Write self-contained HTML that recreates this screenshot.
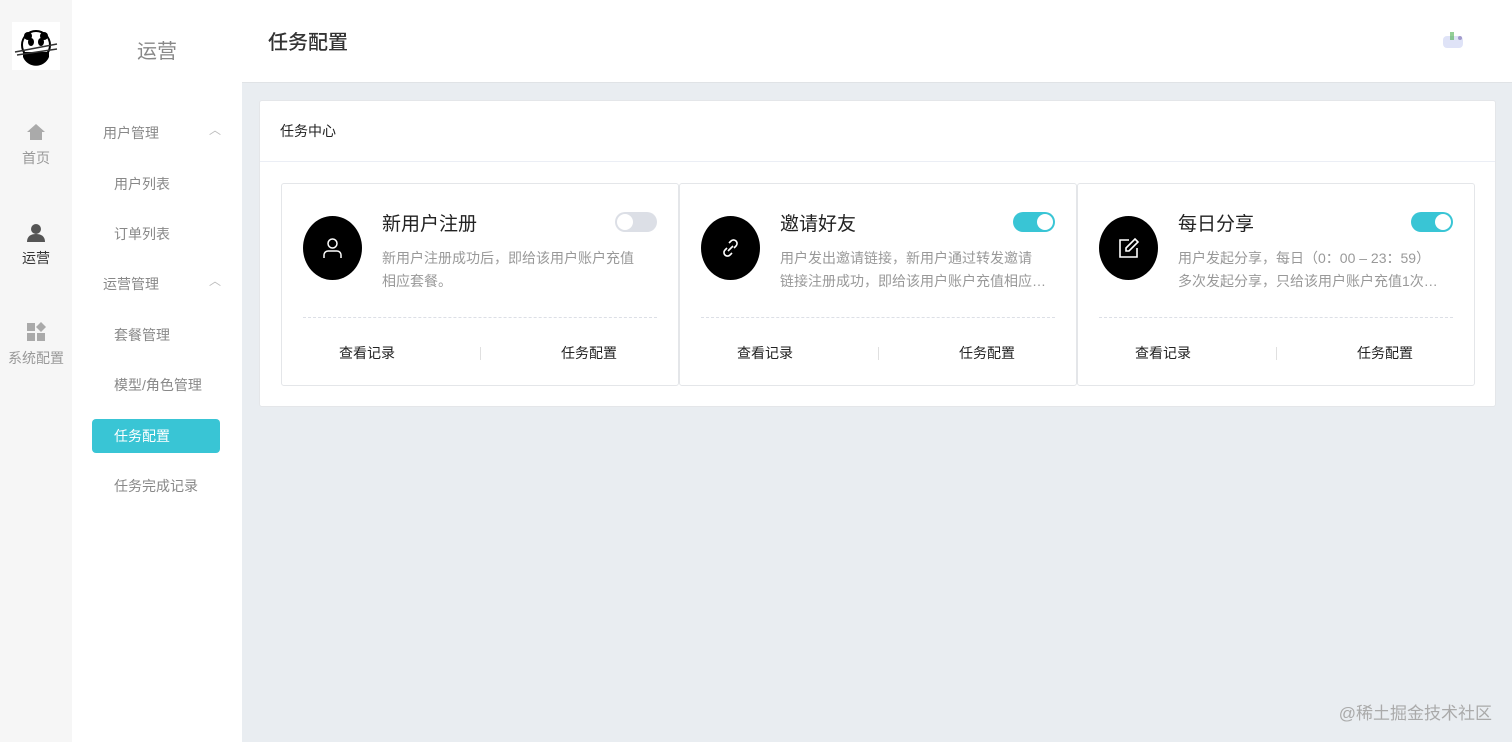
<!DOCTYPE html><html><head><meta charset="utf-8"><style>
*{box-sizing:border-box;margin:0;padding:0}
body{width:1512px;height:742px;overflow:hidden;font-family:"Liberation Sans","Noto Sans CJK SC",sans-serif;background:#e9edf1;position:relative}
.rail{position:absolute;left:0;top:0;width:72px;height:742px;background:#f6f6f6}
.logo{position:absolute;left:12px;top:22px;width:48px;height:48px;background:#fff}
.ri{position:absolute;left:0;width:72px;text-align:center;font-size:14px;color:#999}
.side{position:absolute;left:72px;top:0;width:170px;height:742px;background:#fff}
.side .t{position:absolute;top:35px;width:170px;text-align:center;font-size:20px;color:#888}
.g{position:absolute;left:31px;font-size:14px;color:#888}
.g span{position:absolute;left:106px;top:-2px;color:#bbb;font-size:12px}
.it{position:absolute;left:42px;font-size:14px;color:#888}
.act{position:absolute;left:20px;top:419px;width:128px;height:34px;border-radius:4px;background:#39c5d5}
.hd{position:absolute;left:242px;top:0;width:1270px;height:83px;background:#fff;border-bottom:1px solid #e0e3e6}
.hd h1{position:absolute;left:26px;top:26px;font-size:20px;font-weight:500;color:#333}
.panel{position:absolute;left:259px;top:100px;width:1237px;height:307px;background:#fff;border:1px solid #e4e6e9;border-radius:3px}
.panel .pt{height:61px;border-bottom:1px solid #ebeef5;padding:20px 20px;font-size:14px;color:#222}
.card{position:absolute;top:82px;width:398px;height:203px;border:1px solid #e4e6e9;border-radius:3px;background:#fff}
.ic{position:absolute;left:21px;top:32px;width:59px;height:64px;border-radius:50%;background:#000}
.ic svg{position:absolute;left:19px;top:21px}
.ct{position:absolute;left:100px;top:25px;font-size:19px;color:#222}
.cd{position:absolute;left:100px;top:63px;width:270px;font-size:14px;line-height:23px;color:#999;white-space:normal}
.cd .l2{display:block;white-space:nowrap;overflow:hidden;text-overflow:ellipsis}
.sw{position:absolute;left:333px;top:28px;width:42px;height:20px;border-radius:10px;background:#dcdfe6}
.sw i{position:absolute;top:2px;width:16px;height:16px;border-radius:50%;background:#fff}
.dl{position:absolute;left:21px;right:21px;top:133px;border-top:1px dashed #dcdfe6}
.b1,.b2{position:absolute;top:159px;font-size:14px;color:#222}
.b1{left:57px}.b2{left:279px}
.vs{position:absolute;left:198px;top:163px;width:1px;height:13px;background:#e0e0e0}
.wm{position:absolute;right:20px;top:699px;font-size:17px;color:#aaa}
</style></head><body>
<div class="rail">
<div class="logo"><svg width="48" height="48" viewBox="0 0 48 48"><circle cx="24" cy="23" r="14" fill="none" stroke="#000" stroke-width="2"/><circle cx="16" cy="14" r="4"/><circle cx="32" cy="14" r="4"/><ellipse cx="19" cy="20" rx="3" ry="4"/><ellipse cx="29" cy="20" rx="3" ry="4"/><path d="M11 30h26v5a14 14 0 0 1-26 0z"/><path d="M3 30l42-8M5 33l40-6" stroke="#333" stroke-width="1.5"/></svg></div>
<div class="ri" style="top:122px"><svg width="20" height="20" viewBox="0 0 20 20"><path d="M10 2L1 10h3v8h12v-8h3z" fill="#aaa"/></svg></div>
<div class="ri" style="top:148px">首页</div>
<div class="ri" style="top:223px"><svg width="20" height="20" viewBox="0 0 20 20"><circle cx="10" cy="6" r="5" fill="#555"/><path d="M1 19c0-6 4-8 9-8s9 2 9 8z" fill="#555"/></svg></div>
<div class="ri" style="top:248px;color:#333">运营</div>
<div class="ri" style="top:322px"><svg width="20" height="20" viewBox="0 0 20 20"><rect x="1" y="1" width="8" height="8" fill="#aaa"/><path d="M15 0l5 5-5 5-5-5z" fill="#aaa"/><rect x="1" y="11" width="8" height="8" fill="#aaa"/><rect x="11" y="11" width="8" height="8" fill="#aaa"/></svg></div>
<div class="ri" style="top:348px">系统配置</div>
</div>
<div class="side">
<div class="t">运营</div>
<div class="g" style="top:123px">用户管理<span>︿</span></div>
<div class="it" style="top:174px">用户列表</div>
<div class="it" style="top:224px">订单列表</div>
<div class="g" style="top:274px">运营管理<span>︿</span></div>
<div class="it" style="top:325px">套餐管理</div>
<div class="it" style="top:375px">模型/角色管理</div>
<div class="act"></div>
<div class="it" style="top:426px;color:#fff">任务配置</div>
<div class="it" style="top:476px">任务完成记录</div>
</div>
<div class="hd"><h1>任务配置</h1>
<svg style="position:absolute;left:1198px;top:28px" width="26" height="26" viewBox="0 0 26 26"><rect x="3" y="8" width="20" height="12" rx="4" fill="#dfe3f7"/><path d="M10 4h4v8h-4z" fill="#4caf50" opacity=".6"/><circle cx="20" cy="10" r="2" fill="#7a6bb0" opacity=".6"/></svg></div>
<div class="panel"><div class="pt">任务中心</div>
<div class="card" style="left:21px">
<div class="ic"><svg width="21" height="22" viewBox="0 0 21 22" fill="none" stroke="#fff" stroke-width="1.5"><circle cx="10.5" cy="6.5" r="4.5"/><path d="M2 21v-3a4 4 0 0 1 4-4h9a4 4 0 0 1 4 4v3"/></svg></div>
<div class="ct">新用户注册</div><div class="sw"><i style="left:2px"></i></div>
<div class="cd" style="width:262px">新用户注册成功后，即给该用户账户充值相应套餐。</div>
<div class="dl"></div><div class="b1">查看记录</div><div class="vs"></div><div class="b2">任务配置</div></div>
<div class="card" style="left:419px">
<div class="ic"><svg width="21" height="22" viewBox="0 0 21 22" fill="none" stroke="#fff" stroke-width="1.6"><path d="M9 6l2-2a3.5 3.5 0 0 1 5 5l-2 2M12 16l-2 2a3.5 3.5 0 0 1-5-5l2-2M8 14l5-5"/></svg></div>
<div class="ct">邀请好友</div><div class="sw" style="background:#39c5d5"><i style="left:24px"></i></div>
<div class="cd" style="width:266px">用户发出邀请链接，新用户通过转发邀请<span class="l2">链接注册成功，即给该用户账户充值相应套餐。</span></div>
<div class="dl"></div><div class="b1">查看记录</div><div class="vs"></div><div class="b2">任务配置</div></div>
<div class="card" style="left:817px">
<div class="ic"><svg width="21" height="22" viewBox="0 0 21 22" fill="none" stroke="#fff" stroke-width="1.6"><path d="M11 3H2v17h17v-9"/><path d="M17 2l3 3-9 9H8v-3z"/></svg></div>
<div class="ct">每日分享</div><div class="sw" style="background:#39c5d5"><i style="left:24px"></i></div>
<div class="cd" style="width:272px">用户发起分享，每日（0：00 – 23：59）<span class="l2" style="width:268px">多次发起分享，只给该用户账户充值1次相应套餐。</span></div>
<div class="dl"></div><div class="b1">查看记录</div><div class="vs"></div><div class="b2">任务配置</div></div>
</div>
<div class="wm">@稀土掘金技术社区</div>
</body></html>
